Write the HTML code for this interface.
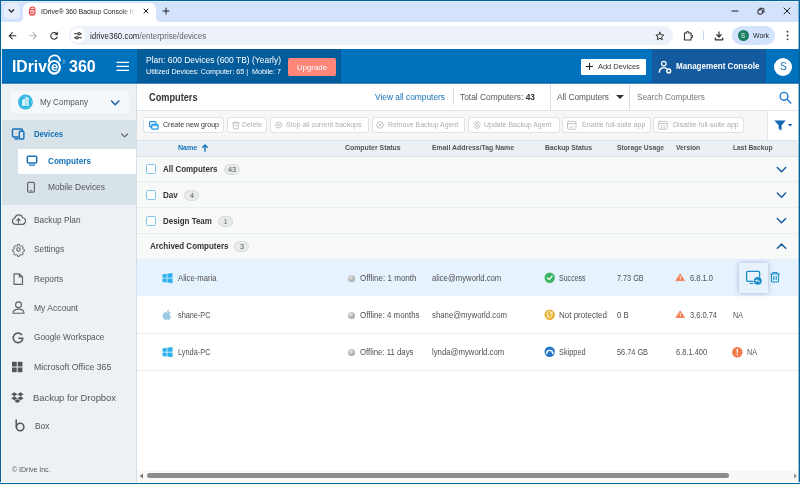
<!DOCTYPE html>
<html lang="en"><head><meta charset="utf-8"><title>IDrive 360 Backup Console</title>
<style>
html,body{margin:0;padding:0}
body{width:800px;height:484px;position:relative;overflow:hidden;background:#fff;font-family:"Liberation Sans",sans-serif}
div,svg{position:absolute;box-sizing:border-box}
.t{white-space:nowrap;transform-origin:0 50%}
.btn{background:#fff;border:1px solid #dde3e8;border-radius:3px;top:116.5px;height:16.5px}
.sep{background:#eaeef1;height:1px;left:137px;width:661px}
.cb{width:10px;height:10px;left:146px;border:1px solid #7cc4e8;border-radius:1.5px;background:#fff}
.badge{height:10.5px;border:1px solid #d8dbde;background:#e8eaec;border-radius:5.5px}
.dot{width:7px;height:7px;border-radius:50%;left:348px;background:radial-gradient(circle at 40% 35%,#e8e8e8 0%,#b5b5b5 50%,#8e8e8e 100%)}

</style></head><body>
<!-- browser chrome -->
<div style="left:0;top:0;width:800px;height:23px;background:#d3e3fd"></div>
<div style="left:3.5px;top:3px;width:16px;height:16px;border-radius:5px;background:#e6eefe"></div>
<div style="left:23px;top:3px;width:133px;height:20px;border-radius:6px 6px 0 0;background:#fff"></div>
<div style="left:19px;top:18px;width:4px;height:4px;background:radial-gradient(circle at 0 0,#d3e3fd 3.6px,#fff 4.2px)"></div>
<div style="left:156px;top:18px;width:4px;height:4px;background:radial-gradient(circle at 100% 0,#d3e3fd 3.6px,#fff 4.2px)"></div>
<div style="left:0;top:22px;width:800px;height:27px;background:#fff"></div>
<div style="left:69px;top:26px;width:604px;height:19px;border-radius:9.5px;background:#edf2fa"></div>
<div style="left:71px;top:28px;width:14px;height:15px;border-radius:7px;background:#fff"></div>
<div style="left:732px;top:26px;width:43px;height:19px;border-radius:9.5px;background:#d3e3fd"></div>
<div style="left:737.5px;top:30px;width:11px;height:11px;border-radius:50%;background:#188060"></div>
<div style="left:703px;top:31px;width:1px;height:9px;background:#c9d7f0"></div>
<!-- app header -->
<div style="left:0;top:49px;width:800px;height:34px;background:#0071bd"></div>
<div style="left:137px;top:49px;width:204px;height:34px;background:#055c9b"></div>
<div style="left:288px;top:58px;width:48px;height:18px;border-radius:2px;background:#ff867a"></div>
<div style="left:581px;top:58.5px;width:65px;height:16px;border-radius:1px;background:#fff"></div>
<div style="left:652px;top:49px;width:114px;height:34px;background:#145a9e"></div>
<div style="left:774px;top:57.5px;width:18px;height:18px;border-radius:50%;background:#fff"></div>
<div style="left:0;top:82px;width:800px;height:1px;background:rgba(0,20,90,.18)"></div>
<!-- sidebar -->
<div style="left:0;top:83px;width:137px;height:401px;background:#ebf1f5"></div>
<div style="left:10px;top:91px;width:119px;height:22px;border-radius:2px;background:#f5f8fa"></div>
<div style="left:0;top:120px;width:137px;height:85px;background:#d8e2e9"></div>
<div style="left:18px;top:149px;width:119px;height:25px;background:#fff"></div>
<div style="left:136px;top:83px;width:1px;height:401px;background:#d3dfe8"></div>
<!-- content -->
<div style="left:137px;top:83px;width:661px;height:28px;background:#fff"></div>
<div style="left:137px;top:110px;width:661px;height:1px;background:#dfe6eb"></div>
<div style="left:453px;top:88px;width:1px;height:17px;background:#d9dfe4"></div>
<div style="left:550px;top:84px;width:1px;height:26px;background:#d9dfe4"></div>
<div style="left:629px;top:84px;width:1px;height:26px;background:#d9dfe4"></div>
<div style="left:137px;top:111px;width:661px;height:29px;background:#f7f7f7"></div>
<div style="left:767px;top:111px;width:31px;height:29px;background:#fff;border-left:1px solid #e1e7ec"></div>
<div class="btn" style="left:143px;width:81px"></div>
<div class="btn" style="left:227px;width:40px"></div>
<div class="btn" style="left:270px;width:99px"></div>
<div class="btn" style="left:372px;width:93px"></div>
<div class="btn" style="left:468px;width:92px"></div>
<div class="btn" style="left:562px;width:89px"></div>
<div class="btn" style="left:653px;width:91px"></div>
<div style="left:137px;top:139.5px;width:661px;height:17.5px;background:#ebf0f5;border-top:1px solid #dde5eb;border-bottom:1px solid #d9e2e9"></div>
<div style="left:137px;top:157px;width:661px;height:102px;background:#f8fafa"></div>
<div class="sep" style="top:181px"></div>
<div class="sep" style="top:207px"></div>
<div class="sep" style="top:233px"></div>
<div class="cb" style="top:164px"></div>
<div class="cb" style="top:189.6px"></div>
<div class="cb" style="top:215.6px"></div>
<div class="badge" style="left:224px;top:164.2px;width:16px"></div>
<div class="badge" style="left:184px;top:190.2px;width:15px"></div>
<div class="badge" style="left:218px;top:216.2px;width:15px"></div>
<div class="badge" style="left:234px;top:241.2px;width:15px"></div>
<div style="left:137px;top:259px;width:661px;height:37px;background:#e6f2fe"></div>
<div class="sep" style="top:333px;background:#ececec"></div>
<div class="sep" style="top:370px;background:#ececec"></div>
<div style="left:739px;top:263px;width:29px;height:30px;background:#e8f2fd;box-shadow:0 0 5px rgba(40,70,110,.35)"></div>
<div class="dot" style="top:274.5px"></div>
<div class="dot" style="top:311.5px"></div>
<div class="dot" style="top:348.5px"></div>
<!-- scrollbar -->
<div style="left:137px;top:471px;width:661px;height:11px;background:#f8f8f8"></div>
<div style="left:147px;top:473px;width:582px;height:5px;border-radius:2.5px;background:#8c8c8c"></div>
<div style="left:0;top:83px;width:800px;height:1px;background:rgba(0,95,170,.7)"></div>
<!-- window border -->
<div style="left:0;top:0;width:800px;height:1px;background:#04649a"></div>
<div style="left:0;top:1px;width:800px;height:1px;background:#dfeafe"></div>
<div style="left:0;top:0;width:1px;height:484px;background:#04649a"></div>
<div style="left:1px;top:22px;width:1px;height:462px;background:rgba(255,255,255,.85)"></div>
<div style="left:799px;top:0;width:1px;height:484px;background:#04649a"></div>
<div style="left:798px;top:0;width:1px;height:484px;background:rgba(4,100,154,.4)"></div>
<div style="left:0;top:482px;width:800px;height:1px;background:rgba(255,255,255,.85)"></div>
<div style="left:0;top:483px;width:800px;height:1px;background:#04649a"></div>
<svg width="800" height="484" viewBox="0 0 800 484" style="left:0;top:0" fill="none" stroke-linecap="round" stroke-linejoin="round">
<!-- chrome: tab search chevron, favicon, close, plus -->
<path d="M9.100 9.800l2.300 2.300 2.300-2.300" stroke="#1f1f1f" stroke-width="1.300"/>
<g stroke="#e53935" stroke-width="1.1"><circle cx="32.2" cy="12.2" r="2.9"/><path d="M30 9.6c0-3.2 4.6-3.6 5-.4"/><path d="M31 12.3h2.4c0-1.6-2.4-1.6-2.4 0s1.600 1.700 2.300.8" stroke-width=".7"/></g>
<path d="M144 9l4 4M148 9l-4 4" stroke="#1f1f1f" stroke-width="1"/>
<path d="M166 8v6M163 11h6" stroke="#1f1f1f" stroke-width="1"/>
<!-- window controls -->
<path d="M732 11h6" stroke="#1f1f1f" stroke-width="1"/>
<rect x="758" y="9.700" width="4.400" height="4.400" rx="1" stroke="#1f1f1f" stroke-width="1"/><path d="M759.700 8.300h3.200a1 1 0 0 1 1 1v3.200" stroke="#1f1f1f" stroke-width="1"/>
<path d="M784 8l6 6M790 8l-6 6" stroke="#1f1f1f" stroke-width="1"/>
<!-- nav -->
<path d="M15.800 35.800h-6.400M12.300 32.700l-3.100 3.100 3.100 3.100" stroke="#333" stroke-width="1.100"/>
<path d="M29.700 35.800h6.400M33.200 32.700l3.100 3.100-3.100 3.100" stroke="#b4b4b4" stroke-width="1.100"/>
<path d="M57.100 34.500a3.300 3.300 0 1 0 .1 2.500" stroke="#333" stroke-width="1.100"/><path d="M57.700 32.200v2.600h-2.600z" fill="#333" stroke="#333" stroke-width=".5"/>
<!-- tune icon -->
<g stroke="#333" stroke-width="1.100"><path d="M74.500 33.700h3M80.500 33.700h1M74.500 37.700h1M78.500 37.700h3"/><circle cx="79" cy="33.700" r="1.200"/><circle cx="77" cy="37.700" r="1.200"/></g>
<!-- star -->
<path d="M659.800 32.200l1.150 2.600 2.800.27-2.080 1.900.63 2.800-2.500-1.450-2.500 1.450.63-2.800-2.080-1.900 2.800-.27z" stroke="#333" stroke-width="1"/>
<!-- extension puzzle -->
<path d="M684.500 33h2.200c-.6-2 2.600-2 2 0h2.300v2.400c2-.6 2 2.600 0 2V40h-6.500z" stroke="#333" stroke-width="1.100"/>
<!-- download -->
<path d="M719 31.800v5M716.700 34.700l2.300 2.300 2.300-2.300M715.300 38v1.800h7.400V38" stroke="#333" stroke-width="1.200"/>
<!-- menu dots -->
<g fill="#333"><circle cx="787.500" cy="31.700" r=".9"/><circle cx="787.500" cy="35.500" r=".9"/><circle cx="787.500" cy="39.300" r=".9"/></g>
<!-- logo e-lock -->
<ellipse cx="54.200" cy="67.300" rx="5.700" ry="6.300" stroke="#fff" stroke-width="2.200"/>
<path d="M49 61.500c-.3-7.500 10-8.500 11-1" stroke="#fff" stroke-width="1.900"/>
<!-- hamburger -->
<path d="M116.500 62.400h12.500M116.500 66.400h12.500M116.500 70.400h12.500" stroke="#fff" stroke-width="1.100" stroke-linecap="butt"/>
<!-- add devices plus -->
<path d="M589.500 63v7M586 66.500h7" stroke="#222" stroke-width="1.100" stroke-linecap="butt"/>
<!-- mgmt console icon -->
<g stroke="#fff" stroke-width="1.200"><circle cx="663.800" cy="63.600" r="2.300"/><path d="M659.300 72.300c0-4.800 5.200-5.600 7.200-3.800"/><circle cx="668.700" cy="71" r="1.900" stroke-width="1.500"/></g>
<!-- company icon -->
<circle cx="25.400" cy="102" r="7.400" fill="#1db0e0"/><circle cx="25.400" cy="102" r="6.100" stroke="#8fd6f0" stroke-width=".6"/>
<path d="M22 106v-6.300l3-1.300v7.600z" fill="#d9f3fc" stroke="none"/><path d="M25.400 106v-9.300l3.400 1.500v7.800z" fill="#fff" stroke="none"/><path d="M26.600 99v6.500M27.800 99.500v6" stroke="#1db0e0" stroke-width=".4"/>
<path d="M111.500 101l3.700 3.700 3.700-3.700" stroke="#1a5fa5" stroke-width="1.500"/>
<!-- devices icon -->
<g stroke="#1572b8" stroke-width="1.400"><path d="M19 137h-5.500a1 1 0 0 1-1-1v-6a1 1 0 0 1 1-1h8a1 1 0 0 1 1 1v1"/><rect x="19.300" y="131.300" width="4.600" height="7.700" rx="1" fill="#d8e2e9"/><path d="M15 139h3"/></g>
<path d="M121.700 134l2.900 2.900 2.900-2.900" stroke="#667" stroke-width="1.200"/>
<!-- computers icon -->
<g stroke="#1572b8" stroke-width="1.500"><rect x="27.300" y="156.300" width="9.400" height="6.700" rx="1"/><path d="M29.500 165.200h5" stroke-width="1.200"/></g>
<!-- mobile icon -->
<g stroke="#666" stroke-width="1.200"><rect x="27.600" y="182.300" width="6.800" height="9.800" rx="1.200"/><path d="M30.300 190.400h1.400" stroke-width=".9"/></g>
<!-- backup plan cloud -->
<g stroke="#626262" stroke-width="1.150"><path d="M15.500 224.300a3.200 3.200 0 0 1-.6-6.300 4 4 0 0 1 7.700-.3 3.300 3.300 0 0 1-.9 6.600z"/><path d="M18.500 222.800v-4M16.800 220.300l1.700-1.700 1.700 1.700"/></g>
<!-- settings gear -->
<g stroke="#626262" stroke-width="1.300" transform="translate(18.5 249.5) scale(.87) translate(-18.5 -249.5)"><circle cx="18.500" cy="249.500" r="2"/><path d="M17.500 243.800h2l.4 1.500 1.300.6 1.400-.8 1.400 1.400-.8 1.400.6 1.300 1.500.4v2l-1.500.4-.6 1.300.8 1.400-1.400 1.400-1.400-.8-1.300.6-.4 1.500h-2l-.4-1.500-1.300-.6-1.400.8-1.400-1.400.8-1.400-.6-1.300-1.500-.4v-2l1.500-.4.600-1.300-.8-1.400 1.400-1.400 1.400.8 1.300-.6z" stroke-width="1.100"/></g>
<!-- reports doc -->
<path d="M14 273.800h5.500l3 3v7.500h-8.500zM19.300 274v3h3" stroke="#626262" stroke-width="1.150"/>
<!-- account person -->
<g stroke="#626262" stroke-width="1.150"><circle cx="18.500" cy="304.800" r="2.900"/><path d="M13 313.200c0-5.500 11-5.500 11 0z"/></g>
<!-- G -->
<path d="M21.900 335a4.800 4.800 0 1 0 .9 3.300h-4.500" stroke="#5a5a5a" stroke-width="1.600" stroke-linecap="butt"/>
<!-- MS squares -->
<g fill="#555" stroke="none"><rect x="12" y="361.800" width="4.700" height="4.700"/><rect x="17.700" y="361.800" width="4.700" height="4.700"/><rect x="12" y="367.500" width="4.700" height="4.700"/><rect x="17.700" y="367.500" width="4.700" height="4.700"/></g>
<!-- dropbox -->
<g fill="#555" stroke="none"><path d="M14.300 392.200l3.100 2-3.100 2-3.100-2zM20.500 392.200l3.100 2-3.100 2-3.100-2zM14.300 396.200l3.100 2-3.100 2-3.100-2zM20.500 396.200l3.100 2-3.100 2-3.100-2zM14.300 400.900l3.100 2 3.100-2-3.100-2z"/></g>
<!-- box b -->
<g stroke="#555" stroke-width="1.500"><path d="M16.200 420v7"/><circle cx="20.200" cy="427" r="3.700"/></g>
<!-- dropdown caret + search -->
<path d="M616 95h8l-4 4z" fill="#333" stroke="none"/>
<g stroke="#1b76d2" stroke-width="1.400"><circle cx="784" cy="96.300" r="3.900"/><path d="M787 99.300l3.800 3.800"/></g>
<!-- toolbar icons -->
<g stroke="#1c94e0" stroke-width="1.250"><rect x="149.600" y="121.600" width="6.300" height="5.300" rx="1"/><rect x="151.700" y="124.300" width="6.300" height="4.900" rx="1" fill="#fff"/><path d="M152 125.800h5.800" stroke-width=".8"/></g>
<g stroke="#bcc1c5" stroke-width=".9">
<path d="M232.500 123h6.500M234.500 123v-1h2.500v1M233.300 123v5.800h5v-5.800M234.800 125.800h2"/>
<circle cx="278.600" cy="125" r="3"/><path d="M278.600 124v2M277.600 125h2"/>
<circle cx="380" cy="125" r="3.300"/><path d="M378.800 123.800l2.400 2.400M381.200 123.800l-2.400 2.400"/>
<circle cx="477" cy="125" r="1.600"/><path d="M473.800 124a3.500 3.500 0 0 1 6.400-.5M480.200 126a3.500 3.500 0 0 1-6.400.5"/>
<rect x="567.500" y="121.300" width="8.500" height="8" rx="1"/><path d="M567.500 123.500h8.500M570 127l1.300 1.200 2.200-2.400"/>
<rect x="658.700" y="121.300" width="8.500" height="8" rx="1"/><path d="M658.700 123.500h8.500M661.700 125.600v2.700M664.200 125.600v2.700"/>
</g>
<!-- filter -->
<path d="M775 120.800h10.200l-3.900 4.600v4.800l-2.400-1.500v-3.300z" fill="#1668b0" stroke="#1668b0" stroke-width=".5"/>
<path d="M787.800 124h4.600l-2.300 2.500z" fill="#1668b0" stroke="none"/>
<!-- name sort arrow -->
<path d="M205 151.300v-6M202.700 147.200l2.300-2.300 2.300 2.300" stroke="#1572b8" stroke-width="1.400"/>
<!-- chevrons right -->
<g stroke="#1b5c9e" stroke-width="1.500"><path d="M777.300 167.500l4.200 4.200 4.200-4.200"/><path d="M777.300 193l4.200 4.200 4.200-4.200"/><path d="M777.300 218.500l4.200 4.200 4.200-4.200"/><path d="M777.300 248.300l4.200-4.200 4.200 4.200"/></g>
<!-- OS icons -->
<g fill="#2db0ec" stroke="none"><path d="M162.500 274.400l4.200-.6v4h-4.200zM167.400 273.700l5.100-.7v4.800h-5.100zM162.500 278.500h4.200v4l-4.200-.6zM167.400 278.500h5.100v4.800l-5.100-.7z"/>
<path d="M162.500 348.400l4.200-.6v4h-4.200zM167.400 347.700l5.100-.7v4.800h-5.100zM162.500 352.500h4.200v4l-4.200-.6zM167.400 352.500h5.100v4.800l-5.100-.7z"/></g>
<g fill="#9ccbe4" stroke="none"><path d="M167.300 312.500c1-1.200 2.800-.7 3.400.2-1.700 1-1.400 3.400.4 4-.5 1.400-1.500 3.200-2.600 3.200-.7 0-1-.4-1.700-.4s-1.100.4-1.700.4c-1.100 0-2.500-2.300-2.500-4.300 0-2.600 2.400-3.900 4.700-3.100z"/><path d="M167 312c-.1-1.300.9-2.500 2.100-2.600.2 1.300-.9 2.600-2.100 2.600z"/></g>
<!-- status icons -->
<circle cx="549.700" cy="277.800" r="5.200" fill="#3cb563"/><path d="M547.300 277.900l1.700 1.700 3.100-3.300" stroke="#fff" stroke-width="1.300"/>
<circle cx="549.700" cy="314.700" r="5.200" fill="#e8b130"/><path d="M549.700 311.700l2.400.9v2c0 1.600-1 2.700-2.400 3.200-1.400-.5-2.400-1.600-2.400-3.200v-2zM552.300 311.900l-5.200 5.600" stroke="#fff" stroke-width=".8"/>
<circle cx="549.700" cy="351.800" r="5.200" fill="#2478c8"/><path d="M546.700 353.500a3 3 0 0 1 6-.3" stroke="#fff" stroke-width="1.300"/><path d="M551.300 352.600l1.500 1.700 1.300-1.900z" fill="#fff" stroke="none"/>
<!-- warnings -->
<g fill="#f47b4f" stroke="#f47b4f" stroke-width=".8"><path d="M680.300 274.200l4.100 6.300h-8.200z"/><path d="M680.300 311.200l4.100 6.300h-8.200z"/></g>
<path d="M680.300 276.500v2M680.300 313.500v2" stroke="#fff" stroke-width=".9"/><circle cx="680.300" cy="279.600" r=".45" fill="#fff"/><circle cx="680.300" cy="316.600" r=".45" fill="#fff"/>
<circle cx="737.300" cy="352.200" r="5.300" fill="#f4794d"/><path d="M737.300 349.300v3.300" stroke="#fff" stroke-width="1.300"/><circle cx="737.300" cy="354.800" r=".75" fill="#fff"/>
<!-- action icons -->
<g stroke="#1a8ac8" stroke-width="1.300"><path d="M753 281.300h-5a1.400 1.400 0 0 1-1.400-1.400v-7.200a1.400 1.400 0 0 1 1.400-1.400h10.200a1.400 1.400 0 0 1 1.400 1.400v4"/><path d="M750 283.500h3" stroke-width="1"/></g>
<circle cx="757.800" cy="280.800" r="3.900" fill="#1a8ac8"/><path d="M756 280.600h2.300a1.200 1.200 0 0 1 1.200 1.300M757 279.500l-1.100 1.100 1.100 1.100" stroke="#fff" stroke-width=".8"/>
<g stroke="#1a8ac8" stroke-width="1.100"><path d="M770.500 274h9M773 274v-1.500h4v1.500M771.500 274v7a1 1 0 0 0 1 1h5a1 1 0 0 0 1-1v-7M773.800 276.300v3.500M776.200 276.300v3.500"/></g>
<!-- scrollbar arrows -->
<path d="M143 473.600v4.800l-3.200-2.400z" fill="#777" stroke="none"/><path d="M794 473.600v4.800l3.200-2.400z" fill="#999" stroke="none"/>
</svg>

<div class="t" style="left:41px;top:7.65px;font-size:7.5px;line-height:7.5px;font-weight:400;color:#1f1f1f;transform:scaleX(0.9021);-webkit-mask-image:linear-gradient(90deg,#000 85%,transparent);mask-image:linear-gradient(90deg,#000 85%,transparent);">IDrive® 360 Backup Console fo</div>
<div class="t" style="left:89.5px;top:31.75px;font-size:8.5px;line-height:8.5px;font-weight:400;color:#1f1f1f;transform:scaleX(0.9351);">idrive360.com<span style="color:#5f6368">/enterprise/devices</span></div>
<div class="t" style="left:741px;top:32.75px;font-size:6.5px;line-height:6.5px;font-weight:400;color:#fff;transform:scaleX(0.9209);">S</div>
<div class="t" style="left:753px;top:31.75px;font-size:7.5px;line-height:7.5px;font-weight:400;color:#1f1f1f;transform:scaleX(0.9209);">Work</div>
<div class="t" style="left:11.9px;top:58.15px;font-size:16.5px;line-height:16.5px;font-weight:700;color:#fff;transform:scaleX(0.9540);">IDriv</div>
<div class="t" style="left:50.8px;top:60.60px;font-size:12px;line-height:12px;font-weight:700;color:#fff;transform:scaleX(1.0617);">e</div>
<div class="t" style="left:62px;top:60.30px;font-size:5px;line-height:5px;font-weight:400;color:#9cc6e6;transform:scaleX(1.0305);">®</div>
<div class="t" style="left:68.7px;top:58.15px;font-size:16.5px;line-height:16.5px;font-weight:700;color:#fff;transform:scaleX(0.9698);">360</div>
<div class="t" style="left:146px;top:55.50px;font-size:9px;line-height:9px;font-weight:400;color:#fff;transform:scaleX(0.9435);">Plan: 600 Devices (600 TB) (Yearly)</div>
<div class="t" style="left:146px;top:69.00px;font-size:6.8px;line-height:6.8px;font-weight:400;color:#fff;transform:scaleX(1.0520);">Utilized Devices: Computer: 65 |&nbsp; Mobile: 7</div>
<div class="t" style="left:297px;top:63.60px;font-size:7.8px;line-height:7.8px;font-weight:400;color:#fff;transform:scaleX(1.0026);">Upgrade</div>
<div class="t" style="left:598.2px;top:62.90px;font-size:7.2px;line-height:7.2px;font-weight:400;color:#333;transform:scaleX(1.0357);">Add Devices</div>
<div class="t" style="left:675.8px;top:62.25px;font-size:8.5px;line-height:8.5px;font-weight:700;color:#fff;transform:scaleX(0.9492);">Management Console</div>
<div class="t" style="left:779.8px;top:61.50px;font-size:10px;line-height:10px;font-weight:400;color:#1572b8;transform:scaleX(1.0192);">S</div>
<div class="t" style="left:40px;top:97.75px;font-size:8.5px;line-height:8.5px;font-weight:400;color:#555;transform:scaleX(0.9585);">My Company</div>
<div class="t" style="left:34px;top:129.60px;font-size:8.8px;line-height:8.8px;font-weight:700;color:#1572b8;transform:scaleX(0.8718);">Devices</div>
<div class="t" style="left:48px;top:156.60px;font-size:8.8px;line-height:8.8px;font-weight:700;color:#1572b8;transform:scaleX(0.9260);">Computers</div>
<div class="t" style="left:48px;top:183.10px;font-size:8.8px;line-height:8.8px;font-weight:400;color:#555;transform:scaleX(0.9555);">Mobile Devices</div>
<div class="t" style="left:33.5px;top:215.50px;font-size:8.8px;line-height:8.8px;font-weight:400;color:#555;transform:scaleX(0.9412);">Backup Plan</div>
<div class="t" style="left:33.5px;top:245.20px;font-size:8.8px;line-height:8.8px;font-weight:400;color:#555;transform:scaleX(0.9498);">Settings</div>
<div class="t" style="left:33.5px;top:274.60px;font-size:8.8px;line-height:8.8px;font-weight:400;color:#555;transform:scaleX(0.9477);">Reports</div>
<div class="t" style="left:33.5px;top:303.60px;font-size:8.8px;line-height:8.8px;font-weight:400;color:#555;transform:scaleX(0.9674);">My Account</div>
<div class="t" style="left:33.5px;top:333.10px;font-size:8.8px;line-height:8.8px;font-weight:400;color:#555;transform:scaleX(0.9443);">Google Workspace</div>
<div class="t" style="left:33.5px;top:362.60px;font-size:8.8px;line-height:8.8px;font-weight:400;color:#555;transform:scaleX(0.9900);">Microsoft Office 365</div>
<div class="t" style="left:33px;top:392.70px;font-size:9.6px;line-height:9.6px;font-weight:400;color:#555;transform:scaleX(0.9788);">Backup for Dropbox</div>
<div class="t" style="left:34.5px;top:422.10px;font-size:8.8px;line-height:8.8px;font-weight:400;color:#555;transform:scaleX(0.9557);">Box</div>
<div class="t" style="left:11.5px;top:466.00px;font-size:7px;line-height:7px;font-weight:400;color:#555;transform:scaleX(0.9972);">© IDrive Inc.</div>
<div class="t" style="left:148.5px;top:92.55px;font-size:10.3px;line-height:10.3px;font-weight:700;color:#333;transform:scaleX(0.8922);">Computers</div>
<div class="t" style="left:375px;top:92.75px;font-size:8.5px;line-height:8.5px;font-weight:400;color:#1572b8;transform:scaleX(0.9833);">View all computers</div>
<div class="t" style="left:460px;top:92.75px;font-size:8.5px;line-height:8.5px;font-weight:400;color:#555;transform:scaleX(0.9856);">Total Computers: <b style="color:#333">43</b></div>
<div class="t" style="left:557px;top:92.75px;font-size:8.5px;line-height:8.5px;font-weight:400;color:#555;transform:scaleX(0.9740);">All Computers</div>
<div class="t" style="left:636.7px;top:92.75px;font-size:8.5px;line-height:8.5px;font-weight:400;color:#777;transform:scaleX(0.9580);">Search Computers</div>
<div class="t" style="left:163px;top:120.90px;font-size:7.2px;line-height:7.2px;font-weight:400;color:#333;transform:scaleX(0.9800);">Create new group</div>
<div class="t" style="left:242px;top:120.90px;font-size:7.2px;line-height:7.2px;font-weight:400;color:#a9aeb3;transform:scaleX(0.9624);">Delete</div>
<div class="t" style="left:286px;top:120.90px;font-size:7.2px;line-height:7.2px;font-weight:400;color:#a9aeb3;transform:scaleX(0.9791);">Stop all current backups</div>
<div class="t" style="left:387.5px;top:120.90px;font-size:7.2px;line-height:7.2px;font-weight:400;color:#a9aeb3;transform:scaleX(0.9586);">Remove Backup Agent</div>
<div class="t" style="left:484.3px;top:120.90px;font-size:7.2px;line-height:7.2px;font-weight:400;color:#a9aeb3;transform:scaleX(0.9693);">Update Backup Agent</div>
<div class="t" style="left:582px;top:120.90px;font-size:7.2px;line-height:7.2px;font-weight:400;color:#a9aeb3;transform:scaleX(0.9717);">Enable full-suite app</div>
<div class="t" style="left:673px;top:120.90px;font-size:7.2px;line-height:7.2px;font-weight:400;color:#a9aeb3;transform:scaleX(0.9860);">Disable full-suite app</div>
<div class="t" style="left:177.8px;top:144.20px;font-size:7px;line-height:7px;font-weight:700;color:#1572b8;transform:scaleX(1.0064);">Name</div>
<div class="t" style="left:345px;top:144.20px;font-size:7px;line-height:7px;font-weight:700;color:#4f5459;transform:scaleX(0.9875);">Computer Status</div>
<div class="t" style="left:431.7px;top:144.20px;font-size:7px;line-height:7px;font-weight:700;color:#4f5459;transform:scaleX(0.9848);">Email Address/Tag Name</div>
<div class="t" style="left:544.5px;top:144.20px;font-size:7px;line-height:7px;font-weight:700;color:#4f5459;transform:scaleX(0.9645);">Backup Status</div>
<div class="t" style="left:617px;top:144.20px;font-size:7px;line-height:7px;font-weight:700;color:#4f5459;transform:scaleX(0.9586);">Storage Usage</div>
<div class="t" style="left:675.8px;top:144.20px;font-size:7px;line-height:7px;font-weight:700;color:#4f5459;transform:scaleX(0.9566);">Version</div>
<div class="t" style="left:732.5px;top:144.20px;font-size:7px;line-height:7px;font-weight:700;color:#4f5459;transform:scaleX(0.9489);">Last Backup</div>
<div class="t" style="left:163.2px;top:164.95px;font-size:8.5px;line-height:8.5px;font-weight:700;color:#333;transform:scaleX(0.9381);">All Computers</div>
<div class="t" style="left:227.8px;top:166.05px;font-size:7.5px;line-height:7.5px;font-weight:400;color:#555;transform:scaleX(0.9828);">43</div>
<div class="t" style="left:163.2px;top:190.65px;font-size:8.5px;line-height:8.5px;font-weight:700;color:#333;transform:scaleX(0.9491);">Dav</div>
<div class="t" style="left:189.6px;top:192.05px;font-size:7.5px;line-height:7.5px;font-weight:400;color:#555;transform:scaleX(0.9588);">4</div>
<div class="t" style="left:163.2px;top:216.65px;font-size:8.5px;line-height:8.5px;font-weight:700;color:#333;transform:scaleX(0.9334);">Design Team</div>
<div class="t" style="left:223.8px;top:218.05px;font-size:7.5px;line-height:7.5px;font-weight:400;color:#555;transform:scaleX(0.8150);">1</div>
<div class="t" style="left:149.5px;top:241.95px;font-size:8.5px;line-height:8.5px;font-weight:700;color:#333;transform:scaleX(0.9389);">Archived Computers</div>
<div class="t" style="left:239.6px;top:243.05px;font-size:7.5px;line-height:7.5px;font-weight:400;color:#555;transform:scaleX(0.9588);">3</div>
<div class="t" style="left:177.5px;top:273.85px;font-size:8.5px;line-height:8.5px;font-weight:400;color:#505050;transform:scaleX(0.9055);">Alice-maria</div>
<div class="t" style="left:359.5px;top:273.85px;font-size:8.5px;line-height:8.5px;font-weight:400;color:#505050;transform:scaleX(0.9439);">Offline: 1 month</div>
<div class="t" style="left:431.7px;top:273.85px;font-size:8.5px;line-height:8.5px;font-weight:400;color:#505050;transform:scaleX(0.9096);">alice@myworld.com</div>
<div class="t" style="left:559px;top:273.85px;font-size:8.5px;line-height:8.5px;font-weight:400;color:#505050;transform:scaleX(0.8280);">Success</div>
<div class="t" style="left:617px;top:273.85px;font-size:8.5px;line-height:8.5px;font-weight:400;color:#505050;transform:scaleX(0.8561);">7.73 GB</div>
<div class="t" style="left:690px;top:273.85px;font-size:8.5px;line-height:8.5px;font-weight:400;color:#505050;transform:scaleX(0.8846);">6.8.1.0</div>
<div class="t" style="left:177.5px;top:310.85px;font-size:8.5px;line-height:8.5px;font-weight:400;color:#505050;transform:scaleX(0.8595);">shane-PC</div>
<div class="t" style="left:359.5px;top:310.85px;font-size:8.5px;line-height:8.5px;font-weight:400;color:#505050;transform:scaleX(0.9281);">Offline: 4 months</div>
<div class="t" style="left:431.7px;top:310.85px;font-size:8.5px;line-height:8.5px;font-weight:400;color:#505050;transform:scaleX(0.9162);">shane@myworld.com</div>
<div class="t" style="left:559px;top:310.85px;font-size:8.5px;line-height:8.5px;font-weight:400;color:#505050;transform:scaleX(0.9406);">Not protected</div>
<div class="t" style="left:617px;top:310.85px;font-size:8.5px;line-height:8.5px;font-weight:400;color:#505050;transform:scaleX(0.9009);">0 B</div>
<div class="t" style="left:690px;top:310.85px;font-size:8.5px;line-height:8.5px;font-weight:400;color:#505050;transform:scaleX(0.8785);">3.6.0.74</div>
<div class="t" style="left:732.6px;top:310.85px;font-size:8.5px;line-height:8.5px;font-weight:400;color:#505050;transform:scaleX(0.8381);">NA</div>
<div class="t" style="left:177.5px;top:347.85px;font-size:8.5px;line-height:8.5px;font-weight:400;color:#505050;transform:scaleX(0.8670);">Lynda-PC</div>
<div class="t" style="left:359.5px;top:347.85px;font-size:8.5px;line-height:8.5px;font-weight:400;color:#505050;transform:scaleX(0.9180);">Offline: 11 days</div>
<div class="t" style="left:431.7px;top:347.85px;font-size:8.5px;line-height:8.5px;font-weight:400;color:#505050;transform:scaleX(0.9150);">lynda@myworld.com</div>
<div class="t" style="left:559px;top:347.85px;font-size:8.5px;line-height:8.5px;font-weight:400;color:#505050;transform:scaleX(0.8659);">Skipped</div>
<div class="t" style="left:617px;top:347.85px;font-size:8.5px;line-height:8.5px;font-weight:400;color:#505050;transform:scaleX(0.8630);">56.74 GB</div>
<div class="t" style="left:675.8px;top:347.85px;font-size:8.5px;line-height:8.5px;font-weight:400;color:#505050;transform:scaleX(0.8800);">6.8.1.400</div>
<div class="t" style="left:746.9px;top:347.85px;font-size:8.5px;line-height:8.5px;font-weight:400;color:#505050;transform:scaleX(0.8381);">NA</div>
</body></html>
